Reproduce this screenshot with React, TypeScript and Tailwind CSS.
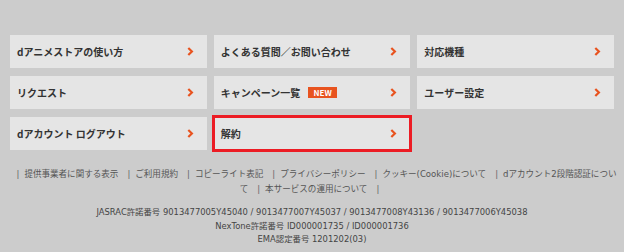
const menu = [
  { label: "dアニメストアの使い方" },
  { label: "よくある質問／お問い合わせ" },
  { label: "対応機種" },
  { label: "リクエスト" },
  { label: "キャンペーン一覧", badge: true },
  { label: "ユーザー設定" },
  { label: "dアカウント ログアウト" },
  { label: "解約", highlight: true },
];

const links1 = ["提供事業者に関する表示", "ご利用規約", "コピーライト表記", "プライバシーポリシー", "クッキー(Cookie)について", "dアカウント2段階認証につい"];

function Arrow() {
  return (
    <svg className="h-[9px] w-[7px] shrink-0" viewBox="0 0 7 9" fill="none" stroke="#e8531f" strokeWidth="2.2">
      <path d="M1.3 1l3.6 3.5L1.3 8" />
    </svg>
  );
}

function Sep() {
  return <span className="pl-[9px] pr-[5px] text-[#666]">|</span>;
}

export default function App() {
  return (
    <div className="h-[252px] w-[624px] bg-[#cccccc] pt-[35px] font-['Noto_Sans_CJK_JP',sans-serif]">
      <div className="mx-[10px] grid grid-cols-3 gap-x-[7px] gap-y-[8px]">
        {menu.map((m) => (
          <a
            key={m.label}
            className={`flex h-[33px] items-center justify-between bg-[#e5e5e5] pl-[7px] pr-[13px] text-[10px] font-bold text-[#333] ${m.highlight ? "outline-[3px] outline-offset-[-1px] outline-[#ec1c24] outline-solid" : ""}`}
          >
            <span className="flex items-center gap-[8px]">
              {m.label}
              {m.badge && <span className="flex h-[11px] w-[29px] items-center justify-center bg-[#e8531f] text-[8px] leading-none text-white">NEW</span>}
            </span>
            <Arrow />
          </a>
        ))}
      </div>
      <div className="mt-[17px] text-center font-['DejaVu_Sans','Noto_Sans_CJK_JP',sans-serif] text-[8.55px] leading-[15px] text-[#555]">
        <p className="whitespace-nowrap">
          {links1.map((l) => (
            <span key={l}>
              <Sep />
              {l}
            </span>
          ))}
        </p>
        <p className="whitespace-nowrap">
          て<Sep />本サービスの運用について<Sep />
        </p>
      </div>
      <div className="mt-[9px] text-center font-['DejaVu_Sans','Noto_Sans_CJK_JP',sans-serif] text-[8.4px] leading-[13.5px] text-[#444]">
        <p>JASRAC許諾番号 9013477005Y45040 / 9013477007Y45037 / 9013477008Y43136 / 9013477006Y45038</p>
        <p>NexTone許諾番号 ID000001735 / ID000001736</p>
        <p>EMA認定番号 1201202(03)</p>
      </div>
    </div>
  );
}
